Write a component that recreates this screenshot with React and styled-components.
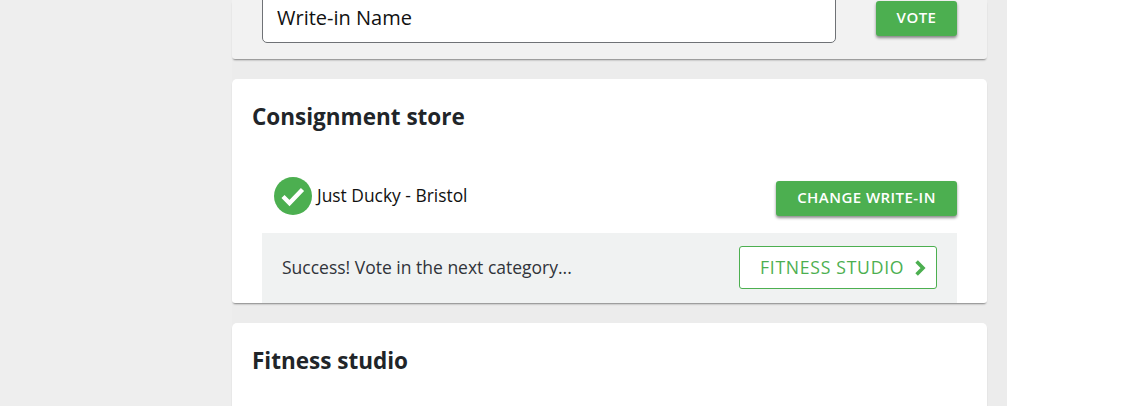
import React from 'react';
import styled, { createGlobalStyle } from 'styled-components';

const GlobalStyle = createGlobalStyle`
  html, body {
    margin: 0;
    padding: 0;
    background: #fff;
    font-family: "Open Sans", "Noto Sans", sans-serif;
    color: #212529;
  }
`;

const Page = styled.div`
  width: 1135px;
  height: 406px;
  overflow: hidden;
  display: flex;
  background: #fff;
`;

const Sidebar = styled.div`
  width: 232px;
  background: #eee;
`;

const Main = styled.main`
  width: 775px;
  height: 406px;
  padding-right: 20px;
  box-sizing: border-box;
  background: #ececec;
  display: flex;
  flex-direction: column;
  gap: 20px;
`;

const Card = styled.section`
  flex: none;
  background: ${props => props.muted ? '#f2f2f2' : '#fff'};
  border-radius: ${props => props.muted ? '0 0 3px 3px' : '5px 5px 3px 3px'};
  box-shadow: 0 2px 2px -1px rgba(0, 0, 0, 0.45);
  box-sizing: border-box;
  height: ${props => props.height}px;
  padding: ${props => props.padding};
`;

const WriteInRow = styled.div`
  display: flex;
  justify-content: space-between;
  align-items: flex-start;
  height: 43px;
`;

const NameInput = styled.input`
  width: 574px;
  height: 51px;
  margin-top: -8px;
  box-sizing: border-box;
  padding: 0 14px;
  background: #fff;
  border: 1px solid #6f7276;
  border-radius: 5px;
  font: 400 20px "Open Sans", sans-serif;
  color: #111;
  outline: none;
  &::placeholder {
    color: #111;
    opacity: 1;
  }
`;

const Button = styled.button`
  height: 35px;
  width: ${props => props.width}px;
  padding: 0 0 3px;
  margin-top: ${props => props.top}px;
  background: #4caf50;
  border: 0;
  border-radius: 3px;
  box-shadow: 0 2px 3px rgba(0, 0, 0, 0.45);
  color: #fff;
  font: 600 15px "Open Sans", sans-serif;
  letter-spacing: 0.45px;
  white-space: nowrap;
`;

const Title = styled.h2`
  margin: 0;
  font-size: 22.5px;
  line-height: 32px;
  font-weight: 700;
  color: #212529;
`;

const CardBody = styled.div`
  margin-left: 10px;
`;

const ResultRow = styled.div`
  display: flex;
  justify-content: space-between;
  align-items: flex-start;
  height: 56px;
  margin-top: 44px;
  padding-left: 12px;
`;

const Choice = styled.div`
  display: flex;
  align-items: center;
  gap: 5px;
  font-size: 17.4px;
  color: #111;
`;

const ChoiceName = styled.span`
  padding-bottom: 3px;
`;

const CheckBadge = styled.svg`
  display: block;
  width: 38px;
  height: 38px;
`;

const NextBar = styled.div`
  display: flex;
  justify-content: space-between;
  align-items: flex-start;
  height: 70px;
  padding: 13px 20px 0;
  box-sizing: border-box;
  background: #f0f2f2;
  font-size: 17.5px;
`;

const NextText = styled.span`
  line-height: 42px;
  color: #30343a;
`;

const NextButton = styled.button`
  display: flex;
  align-items: center;
  gap: 10px;
  height: 43px;
  width: 198px;
  padding: 0 0 0 20px;
  box-sizing: border-box;
  background: #fff;
  border: 1px solid #4caf50;
  border-radius: 3px;
  color: #4caf50;
  font: 500 17.6px "Open Sans", sans-serif;
  letter-spacing: 0.72px;
`;

const NextLabel = styled.span`
  padding-bottom: 2px;
`;

const Chevron = styled.svg`
  display: block;
  width: 12px;
  height: 16px;
`;

export default function App() {
  return (
    <Page>
      <GlobalStyle />
      <Sidebar />
      <Main>
        <Card muted height={59} padding="0 30px">
          <WriteInRow>
            <NameInput placeholder="Write-in Name" />
            <Button width={81} top={1}>VOTE</Button>
          </WriteInRow>
        </Card>

        <Card height={224} padding="22px 30px 0 20px">
          <Title>Consignment store</Title>
          <CardBody>
            <ResultRow>
              <Choice>
                <CheckBadge viewBox="0 0 38 38">
                  <circle cx="19" cy="19" r="19" fill="#4caf50" />
                  <path d="M9 19.5l6.5 6.5 13-13.5" fill="none" stroke="#fff" strokeWidth="4.4" />
                </CheckBadge>
                <ChoiceName>Just Ducky - Bristol</ChoiceName>
              </Choice>
              <Button width={181} top={4}>CHANGE WRITE-IN</Button>
            </ResultRow>
            <NextBar>
              <NextText>Success! Vote in the next category...</NextText>
              <NextButton>
                <NextLabel>FITNESS STUDIO</NextLabel>
                <Chevron viewBox="0 0 12 16">
                  <path d="M2.6 1.6l6.4 6.4-6.4 6.4" fill="none" stroke="#4caf50" strokeWidth="3.6" />
                </Chevron>
              </NextButton>
            </NextBar>
          </CardBody>
        </Card>

        <Card height={120} padding="22px 20px 0">
          <Title>Fitness studio</Title>
        </Card>
      </Main>
    </Page>
  );
}
